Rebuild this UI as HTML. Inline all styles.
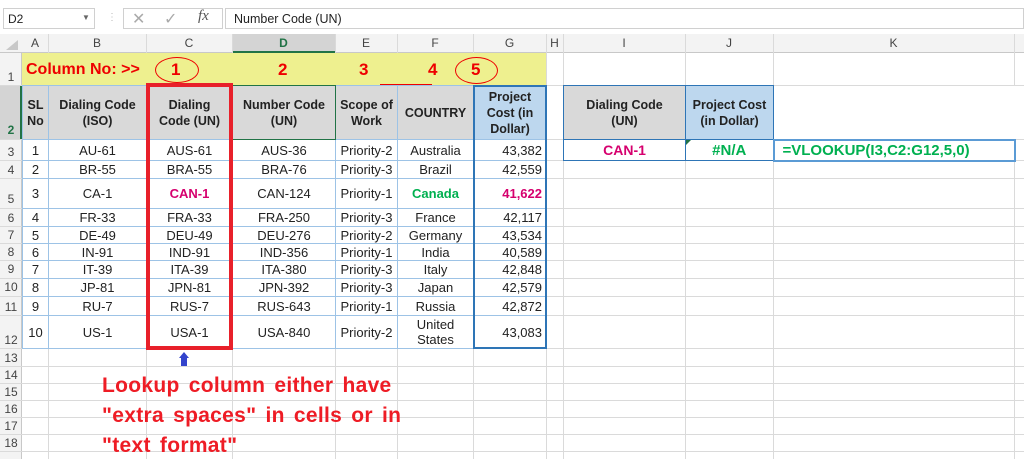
<!DOCTYPE html>
<html><head><meta charset="utf-8"><style>
*{box-sizing:border-box;margin:0;padding:0}
body{width:1024px;height:459px;overflow:hidden;background:#fff;position:relative;font-family:"Liberation Sans",sans-serif;color:#222}
.a{position:absolute}
.vl{position:absolute;top:34px;bottom:0;width:1px;background:#dadada}
.hl{position:absolute;left:0;right:0;height:1px;background:#dadada}
.ch{position:absolute;top:34px;height:19px;font-size:12px;color:#444;text-align:center;line-height:19px}
.rh{position:absolute;left:0;width:22px;font-size:12px;color:#444;text-align:center}
table{border-collapse:collapse;position:absolute;table-layout:fixed}
td{border:1px solid #9dc3e6;text-align:center;font-size:13px;padding:0;white-space:nowrap;overflow:hidden;line-height:15px}
.h td{background:#d9d9d9;font-weight:bold;white-space:nowrap;font-size:12.5px;line-height:16px}
.r{text-align:right;padding-right:4px}
.red{color:#e00;font-weight:bold;font-size:17px;position:absolute}
</style></head><body>
<div class="a" style="left:3px;top:8px;width:92px;height:21px;border:1px solid #d0d0d0;font-size:12px;padding:3px 4px">D2</div>
<div class="a" style="left:82px;top:13px;font-size:8px;color:#666">▼</div>
<div class="a" style="left:107px;top:12px;font-size:10px;color:#bbb">⋮</div>
<div class="a" style="left:123px;top:8px;width:100px;height:21px;border:1px solid #d0d0d0"></div>
<div class="a" style="left:132px;top:9px;font-size:16px;color:#aaa">✕</div>
<div class="a" style="left:164px;top:9px;font-size:16px;color:#aaa">✓</div>
<div class="a" style="left:198px;top:8px;font-size:15px;color:#555;font-style:italic;font-family:'Liberation Serif',serif">fx</div>
<div class="a" style="left:225px;top:8px;width:799px;height:21px;border:1px solid #d0d0d0;font-size:12.5px;padding:3px 8px">Number Code (UN)</div>
<div class="a" style="left:0;top:34px;width:1024px;height:19px;background:#f3f3f3;border-bottom:1px solid #c8c8c8"></div>
<div class="a" style="left:232px;top:34px;width:103px;height:19px;background:#d4d4d4;border-bottom:2px solid #217346"></div>
<div class="a" style="left:0;top:53px;width:22px;height:406px;background:#f3f3f3;border-right:1px solid #c8c8c8"></div>
<div class="a" style="left:0;top:85px;width:22px;height:54px;background:#d4d4d4;border-right:2px solid #217346"></div>
<div class="a" style="left:6px;top:40px;width:0;height:0;border-left:12px solid transparent;border-bottom:10px solid #c8c8c8"></div>
<div class="vl" style="left:48px"></div><div class="vl" style="left:146px"></div><div class="vl" style="left:232px"></div><div class="vl" style="left:335px"></div><div class="vl" style="left:397px"></div><div class="vl" style="left:473px"></div><div class="vl" style="left:546px"></div><div class="vl" style="left:563px"></div><div class="vl" style="left:685px"></div><div class="vl" style="left:773px"></div><div class="vl" style="left:1014px"></div>
<div class="hl" style="top:85px"></div><div class="hl" style="top:139px"></div><div class="hl" style="top:160px"></div><div class="hl" style="top:178px"></div><div class="hl" style="top:208px"></div><div class="hl" style="top:226px"></div><div class="hl" style="top:243px"></div><div class="hl" style="top:260px"></div><div class="hl" style="top:278px"></div><div class="hl" style="top:296px"></div><div class="hl" style="top:315px"></div><div class="hl" style="top:348px"></div><div class="hl" style="top:366px"></div><div class="hl" style="top:383px"></div><div class="hl" style="top:400px"></div><div class="hl" style="top:417px"></div><div class="hl" style="top:434px"></div><div class="hl" style="top:451px"></div>
<div class="ch" style="left:22px;width:26px">A</div><div class="ch" style="left:48px;width:98px">B</div><div class="ch" style="left:146px;width:86px">C</div><div class="ch" style="left:232px;width:103px;color:#217346;font-weight:bold">D</div><div class="ch" style="left:335px;width:62px">E</div><div class="ch" style="left:397px;width:76px">F</div><div class="ch" style="left:473px;width:73px">G</div><div class="ch" style="left:546px;width:17px">H</div><div class="ch" style="left:563px;width:122px">I</div><div class="ch" style="left:685px;width:88px">J</div><div class="ch" style="left:773px;width:241px">K</div>
<div class="rh" style="top:70px">1</div><div class="rh" style="top:123px;color:#217346;font-weight:bold">2</div><div class="rh" style="top:145px">3</div><div class="rh" style="top:163px">4</div><div class="rh" style="top:192px">5</div><div class="rh" style="top:211px">6</div><div class="rh" style="top:228px">7</div><div class="rh" style="top:245px">8</div><div class="rh" style="top:262px">9</div><div class="rh" style="top:280px">10</div><div class="rh" style="top:300px">11</div><div class="rh" style="top:333px">12</div><div class="rh" style="top:351px">13</div><div class="rh" style="top:368px">14</div><div class="rh" style="top:385px">15</div><div class="rh" style="top:402px">16</div><div class="rh" style="top:419px">17</div><div class="rh" style="top:436px">18</div>
<div class="a" style="left:22px;top:53px;width:524px;height:32px;background:#eef08f"></div>
<div class="red" style="left:26px;top:61px;font-size:16px">Column No: &gt;&gt;</div>
<div class="red" style="left:171px;top:60px">1</div><div class="red" style="left:278px;top:60px">2</div><div class="red" style="left:359px;top:60px">3</div><div class="red" style="left:428px;top:60px">4</div><div class="red" style="left:471px;top:60px">5</div>
<div class="a" style="left:155px;top:57px;width:44px;height:26px;border:1.5px solid #e00;border-radius:50%"></div>
<div class="a" style="left:455px;top:57px;width:43px;height:27px;border:1.5px solid #e00;border-radius:50%"></div>
<div class="a" style="left:380px;top:84px;width:52px;height:2px;background:#e00"></div>
<table style="left:22px;top:85px">
<colgroup><col style="width:26px"><col style="width:98px"><col style="width:86px"><col style="width:103px"><col style="width:62px"><col style="width:76px"><col style="width:73px"></colgroup>
<tr class="h" style="height:54px"><td>SL<br>No</td><td>Dialing Code<br>(ISO)</td><td>Dialing<br>Code (UN)</td><td style="border:1px solid #217346">Number Code<br>(UN)</td><td>Scope of<br>Work</td><td>COUNTRY</td><td style="background:#bdd7ee">Project<br>Cost (in<br>Dollar)</td></tr>
<tr style="height:21px"><td>1</td><td>AU-61</td><td>AUS-61</td><td>AUS-36</td><td>Priority-2</td><td>Australia</td><td class="r">43,382</td></tr>
<tr style="height:18px"><td>2</td><td>BR-55</td><td>BRA-55</td><td>BRA-76</td><td>Priority-3</td><td>Brazil</td><td class="r">42,559</td></tr>
<tr style="height:30px"><td>3</td><td>CA-1</td><td style="color:#d6006e;font-weight:bold">CAN-1</td><td>CAN-124</td><td>Priority-1</td><td style="color:#00b050;font-weight:bold">Canada</td><td class="r" style="color:#d6006e;font-weight:bold">41,622</td></tr>
<tr style="height:18px"><td>4</td><td>FR-33</td><td>FRA-33</td><td>FRA-250</td><td>Priority-3</td><td>France</td><td class="r">42,117</td></tr>
<tr style="height:17px"><td>5</td><td>DE-49</td><td>DEU-49</td><td>DEU-276</td><td>Priority-2</td><td>Germany</td><td class="r">43,534</td></tr>
<tr style="height:17px"><td>6</td><td>IN-91</td><td>IND-91</td><td>IND-356</td><td>Priority-1</td><td>India</td><td class="r">40,589</td></tr>
<tr style="height:18px"><td>7</td><td>IT-39</td><td>ITA-39</td><td>ITA-380</td><td>Priority-3</td><td>Italy</td><td class="r">42,848</td></tr>
<tr style="height:18px"><td>8</td><td>JP-81</td><td>JPN-81</td><td>JPN-392</td><td>Priority-3</td><td>Japan</td><td class="r">42,579</td></tr>
<tr style="height:19px"><td>9</td><td>RU-7</td><td>RUS-7</td><td>RUS-643</td><td>Priority-1</td><td>Russia</td><td class="r">42,872</td></tr>
<tr style="height:33px"><td>10</td><td>US-1</td><td>USA-1</td><td>USA-840</td><td>Priority-2</td><td>United<br>States</td><td class="r">43,083</td></tr>
</table>
<div class="a" style="left:473px;top:85px;width:74px;height:264px;border:2px solid #2e75b6"></div>
<div class="a" style="left:146px;top:83px;width:87px;height:267px;border:4px solid #e8202a"></div>
<table style="left:563px;top:85px">
<colgroup><col style="width:122px"><col style="width:88px"><col style="width:241px"></colgroup>
<tr class="h" style="height:54px"><td style="border-color:#2e75b6">Dialing Code<br>(UN)</td><td style="background:#bdd7ee;border-color:#2e75b6">Project Cost<br>(in Dollar)</td><td style="background:#fff;border:none;border-left:1px solid #2e75b6"></td></tr>
<tr style="height:21px"><td style="color:#d6006e;font-weight:bold;font-size:14px;border-color:#2e75b6">CAN-1</td><td style="color:#00b050;font-weight:bold;font-size:15px;border-color:#2e75b6">#N/A</td><td style="color:#00b050;font-weight:bold;font-size:15px;text-align:left;padding-left:8px;border:2px solid #5b9bd5">=VLOOKUP(I3,C2:G12,5,0)</td></tr>
</table>
<div class="a" style="left:686px;top:140px;width:0;height:0;border-top:5px solid #217346;border-right:5px solid transparent"></div>
<div class="a" style="left:179px;top:352px;width:0;height:0;border-left:5px solid transparent;border-right:5px solid transparent;border-bottom:6px solid #3344cc"></div>
<div class="a" style="left:181px;top:357px;width:6px;height:9px;background:#3344cc"></div>
<div class="a" style="left:102px;top:371px;color:#ee1c25;font-weight:bold;font-size:21px;line-height:30px;letter-spacing:0.3px;word-spacing:3px">Lookup column either have<br>"extra spaces" in cells or in<br>"text format"</div>
</body></html>
